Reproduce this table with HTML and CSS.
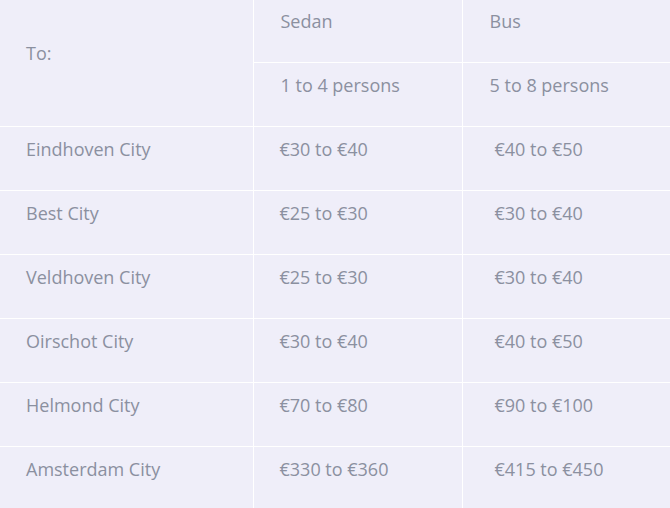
FILE: index.html
```html
<!DOCTYPE html>
<html>
<head>
<meta charset="utf-8">
<link rel="stylesheet" href="styles.css">
</head>
<body>
<table class="prices">
  <colgroup>
    <col class="c1"><col class="c2"><col class="c3">
  </colgroup>
  <tr class="h1">
    <td rowspan="2" class="to"><p>To:</p></td>
    <td><p>Sedan</p></td>
    <td><p>Bus</p></td>
  </tr>
  <tr class="h2">
    <td><p>1 to 4 persons</p></td>
    <td><p>5 to 8 persons</p></td>
  </tr>
  <tr><td><p>Eindhoven City</p></td><td><p>€30 to €40</p></td><td class="ind"><p>€40 to €50</p></td></tr>
  <tr><td><p>Best City</p></td><td><p>€25 to €30</p></td><td class="ind"><p>€30 to €40</p></td></tr>
  <tr><td><p>Veldhoven City</p></td><td><p>€25 to €30</p></td><td class="ind"><p>€30 to €40</p></td></tr>
  <tr><td><p>Oirschot City</p></td><td><p>€30 to €40</p></td><td class="ind"><p>€40 to €50</p></td></tr>
  <tr><td><p>Helmond City</p></td><td><p>€70 to €80</p></td><td class="ind"><p>€90 to €100</p></td></tr>
  <tr class="last"><td><p>Amsterdam City</p></td><td><p>€330 to €360</p></td><td class="ind"><p>€415 to €450</p></td></tr>
</table>
</body>
</html>
```
FILE: styles.css
```css
html, body {
  margin: 0;
  padding: 0;
  background: #efeef9;
}
.prices {
  width: 670px;
  border-collapse: collapse;
  table-layout: fixed;
  font-family: "Open Sans", sans-serif;
  font-size: 18px;
  color: #8b90a0;
  background: #efeef9;
}
.c1 { width: 253px; }
.c2 { width: 209px; }
.c3 { width: 208px; }
.prices td {
  border: 1px solid #ffffff;
  padding: 10px 10px 10px 26px;
  height: 43px;
  vertical-align: top;
  line-height: 24px;
}
.prices td p { margin: 0; }
.prices tr:first-child td { border-top: none; }
.prices td:first-child { border-left: none; }
.prices td:last-child { border-right: none; }
.prices tr.last td { border-bottom: none; }
.prices .to { vertical-align: middle; padding-bottom: 30px; }
.prices .h1 td, .prices .h2 td { height: 43px; }
.prices .h1 td:not(.to) { padding-top: 9px; padding-bottom: 10px; }
.prices .h2 td { padding-top: 10px; padding-bottom: 10px; }
.prices .ind { padding-left: 32px; }
.prices .h1 td:not(.to), .prices .h2 td { padding-left: 27px; }
```
